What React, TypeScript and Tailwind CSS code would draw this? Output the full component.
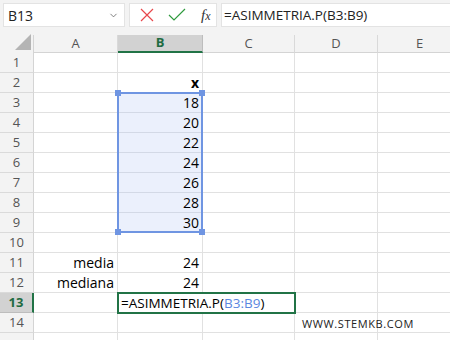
import { ChevronDown } from 'lucide-react';

const cols = [
  { key: 'A', w: 'w-[84px]' },
  { key: 'B', w: 'w-[85px]' },
  { key: 'C', w: 'w-[92px]' },
  { key: 'D', w: 'w-[83px]' },
  { key: 'E', w: 'w-[84px]' },
];

const rows: Record<number, Record<string, { text: string; bold?: boolean }>> = {
  2: { B: { text: 'x', bold: true } },
  3: { B: { text: '18' } },
  4: { B: { text: '20' } },
  5: { B: { text: '22' } },
  6: { B: { text: '24' } },
  7: { B: { text: '26' } },
  8: { B: { text: '28' } },
  9: { B: { text: '30' } },
  11: { A: { text: 'media' }, B: { text: '24' } },
  12: { A: { text: 'mediana' }, B: { text: '24' } },
};

function TopBar() {
  return (
    <div className="h-[35px] bg-[#f3f3f3] flex pt-[3px] pl-[3px] gap-[4px]">
      <div className="w-[122px] h-[24px] bg-white border border-[#e3e3e3] flex items-center justify-between pl-[4px] pr-[5px]">
        <span className="text-[14px] text-[#222]">B13</span>
        <ChevronDown size={11} strokeWidth={1.6} className="text-[#555]" />
      </div>
      <div className="w-[88px] h-[24px] bg-white border border-[#e3e3e3] flex items-center pl-[9px] gap-[13px]">
        <svg width="16" height="16" viewBox="0 0 16 16">
          <path d="M2 2 L14 14 M14 2 L2 14" stroke="#e8474c" strokeWidth="1.2" fill="none" />
        </svg>
        <svg width="18" height="16" viewBox="0 0 18 16">
          <path d="M1 8 L6 13 L17 2" stroke="#2f9a3e" strokeWidth="1.2" fill="none" />
        </svg>
        <span className="text-[15px] italic text-[#333] font-['Liberation_Serif',serif] ml-[2px]">
          f<span className="text-[12px]">x</span>
        </span>
      </div>
      <div className="flex-1 h-[24px] bg-white border border-[#e3e3e3] border-r-0 flex items-center pl-[2px]">
        <span className="text-[13.5px] text-[#222]">=ASIMMETRIA.P(B3:B9)</span>
      </div>
    </div>
  );
}

function HeaderRow() {
  return (
    <div className="flex h-[18px] bg-[#f3f3f3]">
      <div className="w-[34px] shrink-0 border-r border-[#d4d4d4] relative">
        <svg className="absolute right-[2px] bottom-[3px]" width="16" height="16" viewBox="0 0 16 16">
          <path d="M16 0 L16 16 L0 16 Z" fill="#b4b4b4" />
        </svg>
      </div>
      {cols.map((c) =>
        c.key === 'B' ? (
          <div
            key={c.key}
            className={`${c.w} shrink-0 bg-[#d2d2d2] border-r border-[#bdbdbd] border-b-2 border-b-[#217346] flex items-center justify-center text-[13px] font-bold text-[#1e6b41]`}
          >
            {c.key}
          </div>
        ) : (
          <div
            key={c.key}
            className={`${c.w} shrink-0 border-r border-[#d9d9d9] border-b border-b-[#d4d4d4] flex items-center justify-center text-[13px] text-[#555]`}
          >
            {c.key}
          </div>
        )
      )}
    </div>
  );
}

function Row({ n }: { n: number }) {
  const data = rows[n] || {};
  const active = n === 13;
  return (
    <div className="flex h-[20px]">
      <div
        className={`w-[34px] shrink-0 flex items-center justify-center text-[13px] border-b ${
          active
            ? 'bg-[#d2d2d2] border-r-2 border-r-[#217346] text-[#1e6b41] font-bold border-b-[#bdbdbd]'
            : 'bg-[#f3f3f3] border-r border-r-[#d4d4d4] text-[#555] border-b-[#dadada]'
        }`}
      >
        {n <= 14 ? n : ''}
      </div>
      {cols.map((c) => {
        const cell = data[c.key];
        const selected = c.key === 'B' && n >= 3 && n <= 9;
        return (
          <div
            key={c.key}
            className={`${c.w} shrink-0 border-r border-b border-[#e1e1e1] flex items-center justify-end pr-[3px] text-[14px] text-black ${
              cell?.bold ? 'font-bold' : ''
            } ${selected ? 'bg-[#ebf0fc] border-b-[#d3d9e6]' : ''}`}
          >
            {cell?.text}
          </div>
        );
      })}
    </div>
  );
}

export default function App() {
  const rowNums = Array.from({ length: 15 }, (_, i) => i + 1);
  return (
    <div className="w-[450px] h-[340px] overflow-hidden bg-white font-['Open_Sans','Liberation_Sans',sans-serif] relative">
      <TopBar />
      <HeaderRow />
      <div className="relative">
        {rowNums.map((n) => (
          <Row key={n} n={n} />
        ))}

        {/* selection B3:B9 */}
        <div className="absolute left-[117px] top-[39px] w-[86px] h-[141px] border-2 border-[#6f95e2]">
          <div className="absolute -left-[4px] -top-[4px] w-[6px] h-[6px] bg-[#6f95e2]" />
          <div className="absolute -right-[4px] -top-[4px] w-[6px] h-[6px] bg-[#6f95e2]" />
          <div className="absolute -left-[4px] -bottom-[4px] w-[6px] h-[6px] bg-[#6f95e2]" />
          <div className="absolute -right-[4px] -bottom-[4px] w-[6px] h-[6px] bg-[#6f95e2]" />
        </div>

        {/* editing cell B13 */}
        <div className="absolute left-[117px] top-[239px] w-[179px] h-[22px] border-2 border-[#217346] bg-white flex items-center pl-[2px] text-[13.5px] text-black">
          =ASIMMETRIA.P(<span className="text-[#5b87e0]">B3:B9</span>)
        </div>

        {/* watermark */}
        <div className="absolute left-[302px] top-[263px] text-[11px] tracking-[0.6px] text-[#222] font-['Open_Sans',sans-serif]">
          WWW.STEMKB.COM
        </div>
      </div>
    </div>
  );
}
